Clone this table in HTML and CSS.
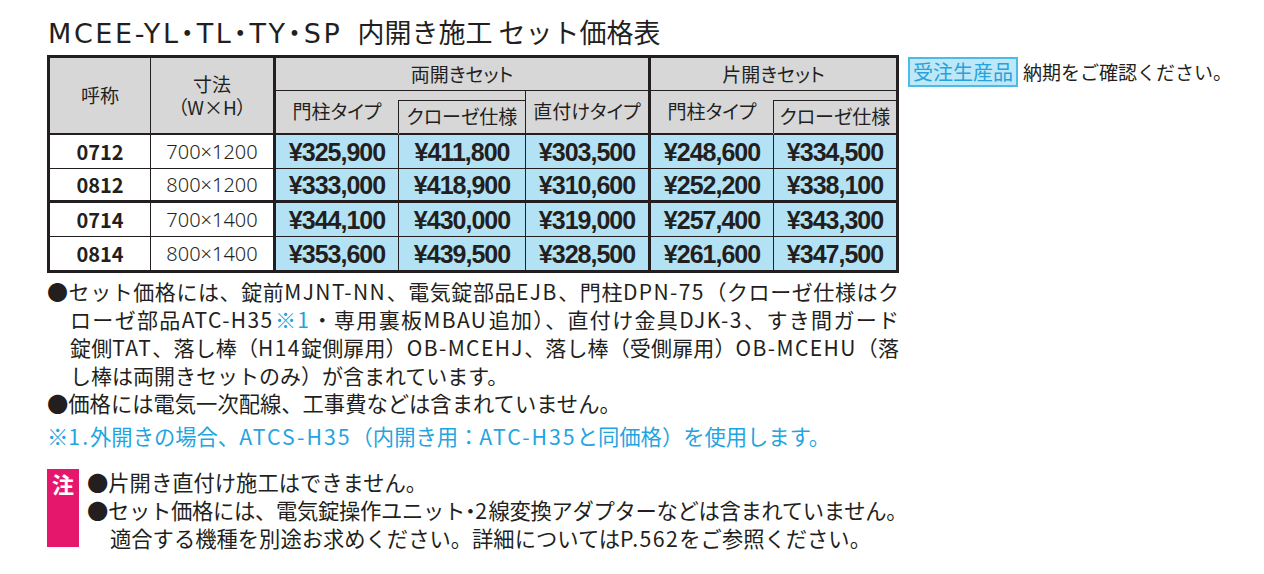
FILE: index.html
```html
<!DOCTYPE html>
<html lang="ja">
<head>
<meta charset="utf-8">
<title>MCEE セット価格表</title>
<link rel="stylesheet" href="styles.css">
</head>
<body>
<div class="page">
  <div class="main">
    <h1 class="title"><span class="title-en">MCEE-YL・TL・TY・SP</span> 内開き施工 セット価格表</h1>
    <div class="price-table">
      <div class="cell hd c-name">呼称</div>
      <div class="cell hd c-size thick-r"><span>寸法</span><span>（W×H）</span></div>
      <div class="cell hd grp thick-r">両開きセット</div>
      <div class="cell hd grp last">片開きセット</div>
      <div class="cell hd sub open">門柱タイプ</div>
      <div class="cell hd sub boxed"><div class="sub-box">クローゼ仕様</div></div>
      <div class="cell hd sub thick-r">直付けタイプ</div>
      <div class="cell hd sub open">門柱タイプ</div>
      <div class="cell hd sub boxed last"><div class="sub-box">クローゼ仕様</div></div>

      <div class="cell code">0712</div>
      <div class="cell size thick-r">700×1200</div>
      <div class="cell price">¥325,900</div>
      <div class="cell price">¥411,800</div>
      <div class="cell price thick-r">¥303,500</div>
      <div class="cell price">¥248,600</div>
      <div class="cell price last">¥334,500</div>

      <div class="cell code sep">0812</div>
      <div class="cell size thick-r sep">800×1200</div>
      <div class="cell price sep">¥333,000</div>
      <div class="cell price sep">¥418,900</div>
      <div class="cell price thick-r sep">¥310,600</div>
      <div class="cell price sep">¥252,200</div>
      <div class="cell price last sep">¥338,100</div>

      <div class="cell code">0714</div>
      <div class="cell size thick-r">700×1400</div>
      <div class="cell price">¥344,100</div>
      <div class="cell price">¥430,000</div>
      <div class="cell price thick-r">¥319,000</div>
      <div class="cell price">¥257,400</div>
      <div class="cell price last">¥343,300</div>

      <div class="cell code end">0814</div>
      <div class="cell size thick-r end">800×1400</div>
      <div class="cell price end">¥353,600</div>
      <div class="cell price end">¥439,500</div>
      <div class="cell price thick-r end">¥328,500</div>
      <div class="cell price end">¥261,600</div>
      <div class="cell price last end">¥347,500</div>
    </div>

    <div class="notes">
      <p class="item long">
        <span class="ln first just">●セット価格には、錠前<span class="en">MJNT-NN</span>、電気錠部品<span class="en">EJB</span>、門柱<span class="en">DPN-75</span>（クローゼ仕様はク</span>
        <span class="ln just">ローゼ部品<span class="en">ATC-H35</span><span class="blue">※<span class="en">1</span></span>・専用裏板<span class="en">MBAU</span>追加）、直付け金具<span class="en">DJK-3</span>、すき間ガード</span>
        <span class="ln just">錠側<span class="en">TAT</span>、落し棒（<span class="en">H14</span>錠側扉用）<span class="en">OB-MCEHJ</span>、落し棒（受側扉用）<span class="en">OB-MCEHU</span>（落</span>
        <span class="ln">し棒は両開きセットのみ）が含まれています。</span>
      </p>
      <p class="item">
        <span class="ln first">●価格には電気一次配線、工事費などは含まれていません。</span>
      </p>
      <p class="footnote">※<span class="en">1.</span>外開きの場合、<span class="en">ATCS-H35</span>（内開き用：<span class="en">ATC-H35</span>と同価格）を使用します。</p>
    </div>

    <div class="caution">
      <div class="caution-mark">注</div>
      <div class="caution-text">
        <p class="item">
          <span class="ln first">●片開き直付け施工はできません。</span>
        </p>
        <p class="item">
          <span class="ln first tight">●セット価格には、電気錠操作ユニット<span class="half">・</span><span class="en">2</span>線変換アダプターなどは含まれていません。</span>
          <span class="ln">適合する機種を別途お求めください。詳細については<span class="en">P.562</span>をご参照ください。</span>
        </p>
      </div>
    </div>
  </div>

  <div class="side">
    <span class="order-tag">受注生産品</span><span class="side-text">納期をご確認ください。</span>
  </div>
</div>
</body>
</html>
```

FILE: styles.css
```css
* {
  box-sizing: border-box;
  margin: 0;
  padding: 0;
}

body {
  background: #ffffff;
  color: #231f20;
  font-family: "Noto Sans CJK JP", "Noto Sans", sans-serif;
}

.page {
  display: flex;
  align-items: flex-start;
  padding: 15px 0 0 47px;
}

.main {
  width: 852px;
  flex: none;
}

.title {
  height: 34px;
  font-size: 27px;
  font-weight: 400;
  line-height: 34px;
  margin: 0 0 6px 1px;
  white-space: nowrap;
}

.title-en {
  font-family: "DejaVu Sans", "Noto Sans CJK JP", sans-serif;
  font-feature-settings: "palt";
  letter-spacing: 2.6px;
  margin-right: 9px;
}

/* ---------- table ---------- */
.price-table {
  display: grid;
  grid-template-columns: 101px 125px 123px 127px 125px 123px 122px;
  grid-template-rows: 33px 44px 34px 34px 34px 33px;
  border: 3px solid #231f20;
}

.cell {
  display: flex;
  align-items: center;
  justify-content: center;
  border-right: 1px solid #231f20;
  border-bottom: 1px solid #231f20;
  white-space: nowrap;
  line-height: 1.2;
}

.cell.thick-r {
  border-right-width: 3px;
}

.cell.last {
  border-right: 0;
}

.cell.sep {
  border-bottom-width: 3px;
}

.cell.end {
  border-bottom: 0;
}

.hd {
  background: #d7d7d7;
  font-size: 19px;
  font-feature-settings: "palt";
}

.c-name,
.c-size {
  grid-row: span 2;
  border-bottom-width: 2px;
}

.c-size {
  flex-direction: column;
  line-height: 23px;
  padding-bottom: 2px;
}

.grp {
  padding-top: 1px;
}

.grp.thick-r {
  grid-column: span 3;
}

.grp.last {
  grid-column: span 2;
}

.sub {
  border-bottom-width: 2px;
  padding-bottom: 2px;
}

.sub.open {
  border-right-color: transparent;
}

.sub.boxed {
  align-items: stretch;
  padding: 9px 0 0 0;
}

.sub-box {
  flex: 1;
  display: flex;
  align-items: center;
  justify-content: center;
  margin-left: -1px;
  border-top: 1px solid #231f20;
  border-left: 1px solid #231f20;
  padding-bottom: 1px;
}

.code {
  font-size: 20px;
  font-weight: 700;
  background: #ffffff;
}

.size {
  font-family: "Noto Sans", "Noto Sans CJK JP", sans-serif;
  font-size: 20px;
  font-weight: 300;
  background: #ffffff;
}

.price {
  background: #b3e2f5;
  font-family: "Liberation Sans", Arial, sans-serif;
  font-weight: 700;
  font-size: 25px;
  letter-spacing: -1px;
}

/* ---------- notes ---------- */
.notes {
  margin-top: 4px;
  font-size: 21.3px;
  line-height: 28px;
}

.item {
  padding-left: 23px;
}

.item.long {
  font-size: 21px;
}

.ln {
  display: block;
  white-space: nowrap;
}

.ln.first {
  margin-left: -23px;
}

.ln.just {
  white-space: normal;
  text-align: justify;
  text-align-last: justify;
}

.ln.tight {
  letter-spacing: -0.3px;
}

.en {
  letter-spacing: 1.4px;
}

.half {
  font-feature-settings: "palt";
}

.blue,
.footnote {
  color: #1fa5df;
}

.footnote {
  margin-top: 5px;
  white-space: nowrap;
}

.footnote .en {
  letter-spacing: 2px;
}

.caution {
  display: flex;
  align-items: flex-start;
  margin-top: 19px;
  font-size: 21.3px;
  line-height: 28px;
}

.caution-mark {
  width: 32px;
  height: 78px;
  flex: none;
  background: #e5176d;
  color: #ffffff;
  font-size: 22px;
  font-weight: 700;
  line-height: 28px;
  text-align: center;
  margin-right: 8px;
}

.caution-text {
  margin-top: -1px;
}

/* ---------- side ---------- */
.side {
  display: flex;
  align-items: center;
  margin: 42px 0 0 9px;
  white-space: nowrap;
}

.order-tag {
  display: inline-block;
  height: 30px;
  padding: 0 3px;
  border: 2px solid #4dbbea;
  background: #bde8f8;
  color: #26a2dc;
  font-size: 20px;
  line-height: 26px;
}

.side-text {
  margin-left: 5px;
  font-size: 19px;
  line-height: 26px;
}
```
